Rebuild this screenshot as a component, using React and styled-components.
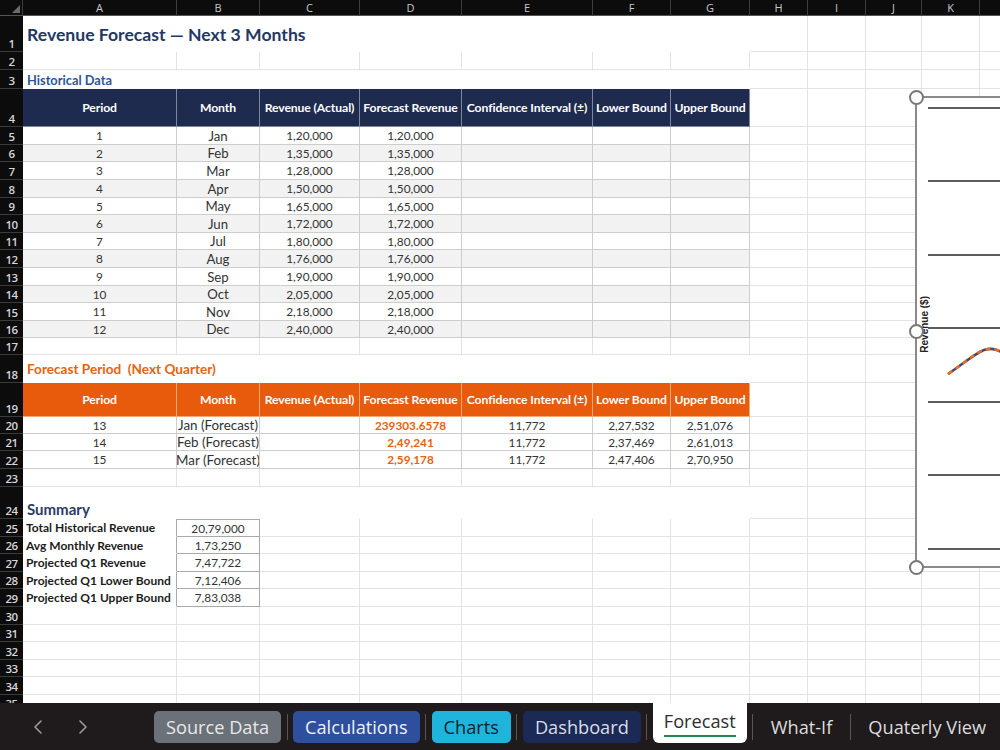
import React from 'react';
import styled, { createGlobalStyle } from 'styled-components';

const GlobalStyle = createGlobalStyle`
  html, body { margin: 0; padding: 0; background: #fff; overflow: hidden; }
  body { font-family: Lato, "Liberation Sans", sans-serif; }
  #root { width: 1000px; height: 750px; }
`;

const COLS = '23px 154px 83px 100px 102px 131px 78px 79px 58px 58px 56px 58px 58px';

const Page = styled.div`
  width: 1000px;
  height: 750px;
  display: flex;
  flex-direction: column;
  overflow: hidden;
`;

const SheetArea = styled.div`
  position: relative;
  flex: 1;
  overflow: hidden;
  background: #fff;
`;

const Row = styled.div`
  display: grid;
  grid-template-columns: ${COLS};
  height: ${(p) => p.$h}px;
`;

const Corner = styled.div`
  position: relative;
  background: #0c0c0c;
  border-right: 1px solid #3d3d3d;
  border-bottom: 1px solid #555;
  box-sizing: border-box;
  &::after {
    content: '';
    position: absolute;
    right: 2px;
    bottom: 2px;
    border-left: 8px solid transparent;
    border-bottom: 8px solid #6a6a6a;
  }
`;

const ColHead = styled.div`
  background: #0c0c0c;
  color: #c9c9c9;
  font-family: "Open Sans", sans-serif;
  font-size: 11px;
  display: flex;
  align-items: center;
  justify-content: center;
  border-right: 1px solid #3d3d3d;
  border-bottom: 1px solid #555;
  box-sizing: border-box;
`;

const RowNum = styled.div`
  background: #0c0c0c;
  color: #d6d6d6;
  font-family: "Open Sans", sans-serif;
  font-size: 11.5px;
  font-weight: 600;
  letter-spacing: -0.5px;
  line-height: 1;
  display: flex;
  align-items: flex-end;
  justify-content: center;
  padding-bottom: 2px;
  border-bottom: 1px solid #3a3a3a;
  box-sizing: border-box;
`;

const Cell = styled.div`
  grid-column: span ${(p) => p.$span || 1};
  box-sizing: border-box;
  display: flex;
  align-items: ${(p) => p.$valign || 'center'};
  justify-content: ${(p) => p.$align || 'center'};
  padding: ${(p) => p.$pad || '0 3px'};
  overflow: hidden;
  white-space: nowrap;
  border-right: 1px solid ${(p) => p.$line || '#e3e3e3'};
  border-bottom: 1px solid ${(p) => p.$line || '#e3e3e3'};
  background: ${(p) => p.$bg || 'transparent'};
  color: ${(p) => p.$color || '#333'};
  font-size: ${(p) => p.$size || 11.8}px;
  font-weight: ${(p) => (p.$bold ? 700 : 400)};
`;

const TitleCell = styled(Cell)`
  border-right: none;
  border-bottom: none;
  justify-content: flex-start;
  padding-left: 4px;
`;

const HeadCell = styled(Cell)`
  color: #fff;
  font-weight: 700;
  font-size: 12.2px;
  padding: 0 1px;
  letter-spacing: -0.1px;
`;

const DataCell = styled(Cell)`
  border-right-color: #cdcdcd;
  border-bottom-color: #cdcdcd;
`;

const SumLabel = styled(Cell)`
  justify-content: flex-start;
  border-bottom-color: transparent;
  border-right-color: #a9a9a9;
  font-weight: 700;
  color: #1c1c1c;
  font-size: 12px;
  padding-left: 3px;
`;

const SumValue = styled(Cell)`
  border-right: 1px solid #a9a9a9;
  border-bottom: 1px solid #a9a9a9;
  ${(p) => (p.$first ? 'border-top: 1px solid #a9a9a9;' : '')}
`;

const ChartBox = styled.div`
  position: absolute;
  left: 915px;
  top: 96px;
  width: 120px;
  height: 472px;
  border: 2px solid #8a8a8a;
  border-right: none;
  box-sizing: border-box;
  background: #fff;
`;

const Handle = styled.span`
  position: absolute;
  left: -8.5px;
  top: ${(p) => p.$y}px;
  width: 15px;
  height: 15px;
  border-radius: 50%;
  border: 2px solid #777;
  background: #fff;
  box-sizing: border-box;
  z-index: 2;
`;

const AxisLabel = styled.span`
  position: absolute;
  left: 2px;
  top: 198px;
  writing-mode: vertical-rl;
  transform: rotate(180deg);
  font-family: "Liberation Sans", sans-serif;
  font-size: 10px;
  font-weight: 700;
  color: #222;
  z-index: 1;
`;

const ChartSvg = styled.svg`
  position: absolute;
  left: 0;
  top: 0;
`;

const TabBar = styled.div`
  height: 47px;
  flex-shrink: 0;
  background: #1f1a1b;
  display: flex;
  align-items: center;
  font-family: "Open Sans", sans-serif;
  font-size: 18.2px;
`;

const NavArrows = styled.div`
  width: 154px;
  flex-shrink: 0;
  display: flex;
  align-items: center;
  gap: 37px;
  padding-left: 34px;
  box-sizing: border-box;
`;

const Tab = styled.div`
  height: 32px;
  flex-shrink: 0;
  display: flex;
  align-items: center;
  padding: 0 12px;
  border-radius: 5px;
  background: ${(p) => p.$bg || 'transparent'};
  color: ${(p) => p.$fg || '#dcdcdc'};
  white-space: nowrap;
`;

const ActiveTab = styled.div`
  align-self: flex-start;
  height: 40px;
  flex-shrink: 0;
  display: flex;
  flex-direction: column;
  align-items: center;
  justify-content: center;
  padding: 0 11px;
  background: #fff;
  color: #2e2e2e;
  border-radius: 0 0 6px 6px;
`;

const ActiveLabel = styled.span`
  line-height: 22px;
  padding-bottom: 3px;
  border-bottom: 2.5px solid #1f8a4c;
`;

const Sep = styled.div`
  width: 1px;
  height: 26px;
  flex-shrink: 0;
  margin: 0 5.5px;
  background: #5a5455;
`;

const LETTERS = ['A', 'B', 'C', 'D', 'E', 'F', 'G', 'H', 'I', 'J', 'K', 'L'];
const HEADERS = ['Period', 'Month', 'Revenue (Actual)', 'Forecast Revenue', 'Confidence Interval (±)', 'Lower Bound', 'Upper Bound'];
const HIST = [
  [1, 'Jan', '1,20,000'], [2, 'Feb', '1,35,000'], [3, 'Mar', '1,28,000'], [4, 'Apr', '1,50,000'],
  [5, 'May', '1,65,000'], [6, 'Jun', '1,72,000'], [7, 'Jul', '1,80,000'], [8, 'Aug', '1,76,000'],
  [9, 'Sep', '1,90,000'], [10, 'Oct', '2,05,000'], [11, 'Nov', '2,18,000'], [12, 'Dec', '2,40,000'],
];
const HIST_H = [18, 17, 18, 18, 17, 18, 17, 18, 18, 17, 18, 17];
const FORE = [
  [13, 'Jan (Forecast)', '239303.6578', '11,772', '2,27,532', '2,51,076'],
  [14, 'Feb (Forecast)', '2,49,241', '11,772', '2,37,469', '2,61,013'],
  [15, 'Mar (Forecast)', '2,59,178', '11,772', '2,47,406', '2,70,950'],
];
const FORE_H = [17, 17, 18];
const SUMMARY = [
  ['Total Historical Revenue', '20,79,000'],
  ['Avg Monthly Revenue', '1,73,250'],
  ['Projected Q1 Revenue', '7,47,722'],
  ['Projected Q1 Lower Bound', '7,12,406'],
  ['Projected Q1 Upper Bound', '7,83,038'],
];
const SUM_H = [18, 17, 18, 17, 18];
const CURVE = 'M31 276 C46 266, 57 256, 67 252 C73 250, 78 250, 90 257';

const blanks = (n, key) => Array.from({ length: n }, (_, i) => <Cell key={`${key}-${i}`} />);

const Chevron = ({ dir }) => (
  <svg width="8" height="14" viewBox="0 0 8 14">
    <polyline
      points={dir === 'left' ? '7,1 1,7 7,13' : '1,1 7,7 1,13'}
      fill="none"
      stroke="#9a9a9a"
      strokeWidth="1.6"
      strokeLinecap="round"
      strokeLinejoin="round"
    />
  </svg>
);

export default function App() {
  const GRID_Y = [10, 83, 157, 230, 304, 377, 451];
  const rows = [];

  rows.push(
    <Row key="r1" $h={36}>
      <RowNum>1</RowNum>
      <TitleCell $span={7} $bold $size={17.6} $color="#1f3864">Revenue Forecast — Next 3 Months</TitleCell>
      {blanks(5, 'r1')}
    </Row>
  );
  rows.push(
    <Row key="r2" $h={18}>
      <RowNum>2</RowNum>
      {blanks(12, 'r2')}
    </Row>
  );
  rows.push(
    <Row key="r3" $h={19}>
      <RowNum>3</RowNum>
      <TitleCell $span={7} $bold $size={12.8} $color="#2f5597">Historical Data</TitleCell>
      {blanks(5, 'r3')}
    </Row>
  );
  rows.push(
    <Row key="r4" $h={38}>
      <RowNum>4</RowNum>
      {HEADERS.map((h) => (
        <HeadCell key={h} $bg="#1e2b4f" $line="#7d869a">{h}</HeadCell>
      ))}
      {blanks(5, 'r4')}
    </Row>
  );
  HIST.forEach((r, i) => {
    const bg = i % 2 === 1 ? '#f2f2f2' : '#fff';
    rows.push(
      <Row key={`h${i}`} $h={HIST_H[i]}>
        <RowNum>{5 + i}</RowNum>
        <DataCell $bg={bg}>{r[0]}</DataCell>
        <DataCell $bg={bg} $size={13.2}>{r[1]}</DataCell>
        <DataCell $bg={bg}>{r[2]}</DataCell>
        <DataCell $bg={bg}>{r[2]}</DataCell>
        <DataCell $bg={bg} />
        <DataCell $bg={bg} />
        <DataCell $bg={bg} />
        {blanks(5, `h${i}`)}
      </Row>
    );
  });
  rows.push(
    <Row key="r17" $h={17}>
      <RowNum>17</RowNum>
      {blanks(12, 'r17')}
    </Row>
  );
  rows.push(
    <Row key="r18" $h={28}>
      <RowNum>18</RowNum>
      <TitleCell $span={7} $bold $size={13.6} $color="#e8630e">Forecast Period&nbsp; (Next Quarter)</TitleCell>
      {blanks(5, 'r18')}
    </Row>
  );
  rows.push(
    <Row key="r19" $h={34}>
      <RowNum>19</RowNum>
      {HEADERS.map((h) => (
        <HeadCell key={h} $bg="#e85a0c" $line="#f2a878">{h}</HeadCell>
      ))}
      {blanks(5, 'r19')}
    </Row>
  );
  FORE.forEach((r, i) => {
    rows.push(
      <Row key={`f${i}`} $h={FORE_H[i]}>
        <RowNum>{20 + i}</RowNum>
        <DataCell>{r[0]}</DataCell>
        <DataCell $pad="0" $size={13.4}>{r[1]}</DataCell>
        <DataCell />
        <DataCell $color="#e8630e" $bold>{r[2]}</DataCell>
        <DataCell>{r[3]}</DataCell>
        <DataCell>{r[4]}</DataCell>
        <DataCell>{r[5]}</DataCell>
        {blanks(5, `f${i}`)}
      </Row>
    );
  });
  rows.push(
    <Row key="r23" $h={18}>
      <RowNum>23</RowNum>
      {blanks(12, 'r23')}
    </Row>
  );
  rows.push(
    <Row key="r24" $h={32}>
      <RowNum>24</RowNum>
      <TitleCell $span={7} $bold $size={15} $color="#2b3a68" $valign="flex-end" $pad="0 0 1px 4px">Summary</TitleCell>
      {blanks(5, 'r24')}
    </Row>
  );
  SUMMARY.forEach((r, i) => {
    rows.push(
      <Row key={`s${i}`} $h={SUM_H[i]}>
        <RowNum>{25 + i}</RowNum>
        <SumLabel>{r[0]}</SumLabel>
        <SumValue $first={i === 0}>{r[1]}</SumValue>
        {blanks(10, `s${i}`)}
      </Row>
    );
  });
  [30, 31, 32, 33, 34, 35].forEach((n, i) => {
    rows.push(
      <Row key={`e${n}`} $h={i % 2 === 0 ? 18 : 17}>
        <RowNum>{n}</RowNum>
        {blanks(12, `e${n}`)}
      </Row>
    );
  });

  return (
    <Page>
      <GlobalStyle />
      <SheetArea>
        <Row $h={16}>
          <Corner />
          {LETTERS.map((l) => (
            <ColHead key={l}>{l}</ColHead>
          ))}
        </Row>
        {rows}
        <ChartBox>
          <Handle $y={-8.5} />
          <Handle $y={225.5} />
          <Handle $y={461.5} />
          <AxisLabel>Revenue ($)</AxisLabel>
          <ChartSvg width="120" height="470" viewBox="0 0 120 470">
            {GRID_Y.map((y) => (
              <line key={y} x1="11" x2="120" y1={y} y2={y} stroke="#5c5c5c" strokeWidth="2" />
            ))}
            <path d={CURVE} fill="none" stroke="#3d4a78" strokeWidth="2.6" />
            <path d={CURVE} fill="none" stroke="#ee6a1c" strokeWidth="2.6" strokeDasharray="5 4" />
          </ChartSvg>
        </ChartBox>
      </SheetArea>
      <TabBar>
        <NavArrows>
          <Chevron dir="left" />
          <Chevron dir="right" />
        </NavArrows>
        <Tab $bg="#6b7178" $fg="#e8e8e8">Source Data</Tab>
        <Sep />
        <Tab $bg="#2d4f9e" $fg="#eef1f8">Calculations</Tab>
        <Sep />
        <Tab $bg="#1fb4dc" $fg="#0f2330">Charts</Tab>
        <Sep />
        <Tab $bg="#1b2a55" $fg="#d9dde8">Dashboard</Tab>
        <Sep />
        <ActiveTab>
          <ActiveLabel>Forecast</ActiveLabel>
        </ActiveTab>
        <Sep />
        <Tab>What-If</Tab>
        <Sep />
        <Tab>Quaterly View</Tab>
      </TabBar>
    </Page>
  );
}
